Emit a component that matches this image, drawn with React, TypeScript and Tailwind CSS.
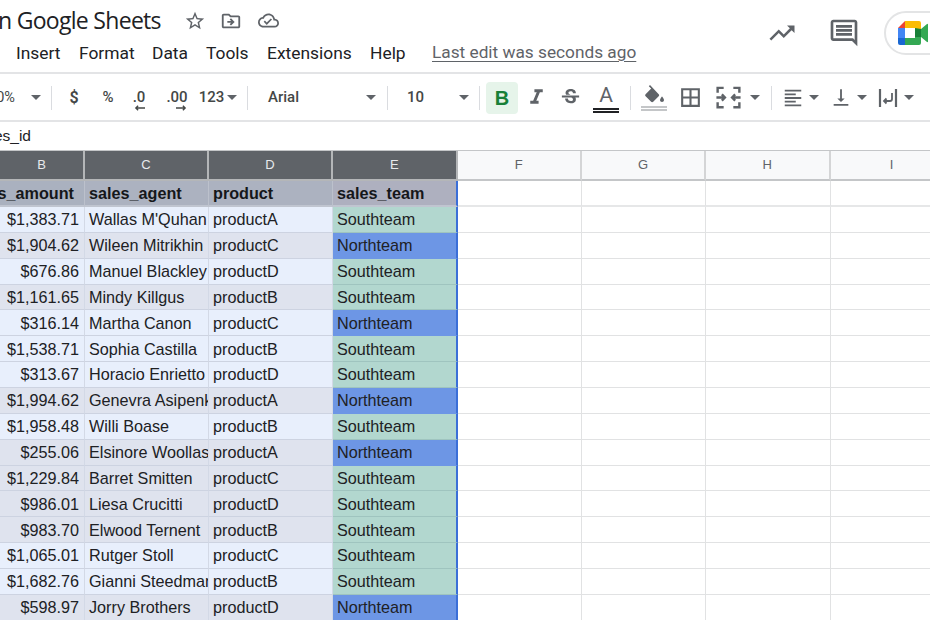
import type { ReactNode } from 'react';

const rows = [
  ['$1,383.71', "Wallas M'Quhan", 'productA', 'S', 0],
  ['$1,904.62', 'Wileen Mitrikhin', 'productC', 'N', 1],
  ['$676.86', 'Manuel Blackley', 'productD', 'S', 0],
  ['$1,161.65', 'Mindy Killgus', 'productB', 'S', 1],
  ['$316.14', 'Martha Canon', 'productC', 'N', 0],
  ['$1,538.71', 'Sophia Castilla', 'productB', 'S', 0],
  ['$313.67', 'Horacio Enrietto', 'productD', 'S', 0],
  ['$1,994.62', 'Genevra Asipenko', 'productA', 'N', 1],
  ['$1,958.48', 'Willi Boase', 'productB', 'S', 0],
  ['$255.06', 'Elsinore Woollaston', 'productA', 'N', 1],
  ['$1,229.84', 'Barret Smitten', 'productC', 'S', 1],
  ['$986.01', 'Liesa Crucitti', 'productD', 'S', 1],
  ['$983.70', 'Elwood Ternent', 'productB', 'S', 1],
  ['$1,065.01', 'Rutger Stoll', 'productC', 'S', 0],
  ['$1,682.76', 'Gianni Steedman', 'productB', 'S', 0],
  ['$598.97', 'Jorry Brothers', 'productD', 'N', 1],
] as const;

const gridCols = 'grid grid-cols-[85px_124px_124px_124.5px_124.5px_124px_124.5px_124px]';

function Icon({ d, size = 22, className = '' }: { d: string; size?: number; className?: string }) {
  return (
    <svg viewBox="0 0 24 24" width={size} height={size} fill="#5f6368" className={className}>
      <path d={d} />
    </svg>
  );
}

function Caret() {
  return (
    <svg viewBox="0 0 10 5" width="10" height="5" fill="#5f6368">
      <path d="M0 0h10L5 5z" />
    </svg>
  );
}

function Sep() {
  return <div className="w-px h-[24px] bg-[#dadce0] shrink-0" />;
}

function Slot({ className, children }: { className: string; children: ReactNode }) {
  return <div className={`flex items-center justify-center shrink-0 h-full ${className}`}>{children}</div>;
}

function MeetLogo() {
  return (
    <svg viewBox="0 0 30 24" width="30" height="24">
      <path d="M7 0v7H0z" fill="#ea4335" />
      <path d="M0 7h7v10H0z" fill="#4285f4" />
      <path d="M0 17h7v7H2a2 2 0 0 1-2-2z" fill="#1967d2" />
      <path d="M7 0h14a2 2 0 0 1 2 2v6l-6 0v-1H7z" fill="#fbbc04" />
      <path d="M7 17h10v-1l6 0v6a2 2 0 0 1-2 2H7z" fill="#34a853" />
      <path d="M17 7l6 1v8l-6 0z" fill="#188038" />
      <path d="M23 8l6-5a.6.6 0 0 1 1 .5v17a.6.6 0 0 1-1 .5l-6-5z" fill="#34a853" />
    </svg>
  );
}

function Cell({ className, children }: { className: string; children?: ReactNode }) {
  return <div className={`flex items-center overflow-hidden whitespace-nowrap box-border ${className}`}>{children}</div>;
}

function ColHead({ label, on }: { label: string; on?: boolean }) {
  return (
    <div
      className={
        on
          ? 'flex items-center justify-center h-[30px] box-border bg-[#5f6368] text-[#e8eaed] border-r-2 border-r-[#b4b6b8] border-b-2 border-b-[#b4b6b8]'
          : 'flex items-center justify-center h-[30px] box-border bg-[#f8f9fa] text-[#5f6368] border-r-2 border-r-[#d4d5d6] border-b-2 border-b-[#c4c6c8]'
      }
    >
      {label}
    </div>
  );
}

export default function App() {
  return (
    <div className="w-[930px] h-[620px] overflow-hidden bg-white text-[#202124] font-['Roboto',sans-serif]">
      {/* title + menu */}
      <div className="flex h-[72px]">
        <div className="w-[760px] shrink-0">
          <div className="flex items-center h-[41px]">
            <span className="text-[23px] -ml-[2px] w-[184px] shrink-0 whitespace-nowrap font-['Open_Sans',sans-serif] tracking-[-0.7px]">n Google Sheets</span>
            <Slot className="w-[26px]">
              <Icon size={22} d="M22 9.24l-7.19-.62L12 2 9.19 8.63 2 9.24l5.46 4.73L5.82 21 12 17.27 18.18 21l-1.63-7.03L22 9.24zM12 15.4l-3.76 2.27 1-4.28-3.32-2.88 4.38-.38L12 6.1l1.71 4.04 4.38.38-3.32 2.88 1 4.28L12 15.4z" />
            </Slot>
            <Slot className="w-[24px] ml-[11px]">
              <Icon size={22} d="M20 6h-8l-2-2H4c-1.1 0-2 .9-2 2v12c0 1.1.9 2 2 2h16c1.1 0 2-.9 2-2V8c0-1.1-.9-2-2-2zm0 12H4V6h5.17l2 2H20v10zm-8.01-9l-1.41 1.41L12.16 12H8v2h4.16l-1.59 1.59L11.99 17 16 13.01 11.99 9z" />
            </Slot>
            <Slot className="w-[24px] ml-[13px]">
              <Icon size={21} d="M19.35 10.04C18.67 6.59 15.64 4 12 4 9.11 4 6.6 5.64 5.35 8.04 2.34 8.36 0 10.91 0 14c0 3.31 2.69 6 6 6h13c2.76 0 5-2.24 5-5 0-2.64-2.05-4.78-4.65-4.96zM19 18H6c-2.21 0-4-1.79-4-4 0-2.05 1.53-3.76 3.56-3.97l1.07-.11.5-.95C8.08 7.14 9.94 6 12 6c2.62 0 4.88 1.86 5.39 4.43l.3 1.5 1.53.11c1.56.1 2.78 1.41 2.78 2.96 0 1.65-1.35 3-3 3zm-9-3.82l-2.09-2.09L6.5 13.5 10 17l6.01-6.01-1.41-1.41z" />
            </Slot>
          </div>
          <div className="flex items-center h-[24px] pl-[16px] text-[17.4px] whitespace-nowrap">
            <span className="w-[63px]">Insert</span>
            <span className="w-[73px]">Format</span>
            <span className="w-[54px]">Data</span>
            <span className="w-[61px]">Tools</span>
            <span className="w-[103px]">Extensions</span>
            <span className="w-[62px]">Help</span>
            <span className="text-[#5f6368] text-[17.25px] underline underline-offset-[3px]">Last edit was seconds ago</span>
          </div>
        </div>
        <Slot className="w-[44px] h-[60px] ml-[0px] pb-[6px]">
          <Icon size={30} d="M16 6l2.29 2.29-4.88 4.88-4-4L2 16.59 3.41 18l6-6 4 4 6.3-6.29L22 12V6z" />
        </Slot>
        <Slot className="w-[80px] h-[60px] pb-[6px]">
          <Icon size={32} d="M21.99 4c0-1.1-.89-2-1.99-2H4c-1.1 0-2 .9-2 2v12c0 1.1.9 2 2 2h14l4 4-.01-18zM20 4v13.17L18.83 16H4V4h16zM6 12h12v2H6zm0-3h12v2H6zm0-3h12v2H6z" />
        </Slot>
        <div className="mt-[11px] h-[44px] w-[70px] shrink-0 box-border border-2 border-[#e3e4e5] rounded-full flex items-center pl-[12px]">
          <MeetLogo />
        </div>
      </div>

      {/* toolbar */}
      <div className="flex items-center h-[50px] pt-[1px] box-border border-y-2 border-[#e3e4e6] text-[#444746] text-[15px] overflow-hidden">
        <div className="w-[51px] shrink-0 flex items-center justify-end overflow-hidden pr-[10px] gap-[16px]">
          <span className="text-[14.5px] shrink-0">100%</span>
          <div className="shrink-0"><Caret /></div>
        </div>
        <Sep />
        <Slot className="w-[44px] font-semibold text-[16px]">$</Slot>
        <Slot className="w-[24px] text-[15px] font-medium">%</Slot>
        <Slot className="w-[38px] font-medium relative">
          <span>.0</span>
          <svg viewBox="0 0 12 6" width="11" height="6" className="absolute left-[14px] top-[30px]" fill="none" stroke="#444746" strokeWidth="1.5">
            <path d="M12 3H2M4.5.5L2 3l2.5 2.5" />
          </svg>
        </Slot>
        <Slot className="w-[38px] font-medium relative">
          <span>.00</span>
          <svg viewBox="0 0 12 6" width="11" height="6" className="absolute left-[18px] top-[30px]" fill="none" stroke="#444746" strokeWidth="1.5">
            <path d="M0 3h10M7.5.5L10 3 7.5 5.5" />
          </svg>
        </Slot>
        <Slot className="w-[44px] gap-[3px] font-medium"><span>123</span><Caret /></Slot>
        <div className="ml-[7px]"><Sep /></div>
        <div className="w-[139px] shrink-0 flex items-center justify-between pl-[20px] pr-[11px] font-medium text-[15px]">
          <span>Arial</span>
          <Caret />
        </div>
        <Sep />
        <div className="w-[91px] shrink-0 flex items-center justify-between pl-[19px] pr-[10px] font-medium">
          <span>10</span>
          <Caret />
        </div>
        <Sep />
        <div className="w-[32px] h-[32px] ml-[6px] shrink-0 rounded-[4px] bg-[#e6f4ea] text-[#188038] flex items-center justify-center text-[20px] font-bold font-['Liberation_Sans',sans-serif]">B</div>
        <Slot className="w-[36px]"><Icon size={25} d="M10 4v3h2.21l-3.42 8H6v3h8v-3h-2.21l3.42-8H18V4z" /></Slot>
        <Slot className="w-[33px]"><Icon size={23} d="M6.85 7.08C6.85 4.37 9.45 3 12.24 3c1.64 0 3 .49 3.9 1.28.77.65 1.46 1.73 1.46 3.24h-3.01c0-.31-.05-.59-.15-.85-.29-.86-1.2-1.28-2.25-1.28-1.86 0-2.34 1.02-2.34 1.7 0 .48.25.88.74 1.21.38.25.77.48 1.41.7H7.39c-.21-.34-.54-.89-.54-1.92zM21 12v-2H3v2h9.62c1.15.45 1.96.75 1.96 1.97 0 1-.81 1.67-2.28 1.67-1.54 0-2.93-.54-2.93-2.51H6.4c0 .55.08 1.13.24 1.58.81 2.29 3.29 3.3 5.67 3.3 2.27 0 5.3-.89 5.3-4.05 0-.3-.01-1.16-.48-1.94H21V12z" /></Slot>
        <div className="w-[38px] shrink-0 flex flex-col items-center">
          <span className="text-[21px] leading-[24px] text-[#5f6368]">A</span>
          <div className="w-[26px] h-[2px] bg-[#202124] mt-[1px]" />
          <div className="w-[26px] h-[2px] bg-[#202124] mt-[1px]" />
        </div>
        <div className="ml-[5px]"><Sep /></div>
        <div className="w-[46px] shrink-0 flex flex-col items-center">
          <svg viewBox="0 0 24 20" width="24" height="20" fill="#5f6368">
            <path d="M8 0L6.8 1.2l2.4 2.4-5.6 5.6c-.6.6-.6 1.5 0 2.1l5.5 5.5c.6.6 1.5.6 2.1 0l5.5-5.5c.6-.6.6-1.5 0-2.1z" />
            <path d="M20 11.5s-2 2.2-2 3.5c0 1.1.9 2 2 2s2-.9 2-2c0-1.3-2-3.5-2-3.5z" />
          </svg>
          <div className="w-[26px] h-[2px] bg-[#c4c6c8] mt-[1px]" />
          <div className="w-[26px] h-[2px] bg-[#c4c6c8] mt-[1px]" />
        </div>
        <Slot className="w-[26px]"><Icon size={25} d="M3 3v18h18V3H3zm8 16H5v-6h6v6zm0-8H5V5h6v6zm8 8h-6v-6h6v6zm0-8h-6V5h6v6z" /></Slot>
        <Slot className="w-[30px] ml-[10px]">
          <svg viewBox="0 0 24 24" width="29" height="29" fill="none" stroke="#5f6368" strokeWidth="2">
            <path d="M3 8V4h5M16 4h5v4M3 16v4h5M16 20h5v-4" />
            <path d="M2 12h7M6.5 9.5L9 12l-2.5 2.5M22 12h-7M17.5 9.5L15 12l2.5 2.5" />
          </svg>
        </Slot>
        <Slot className="w-[24px]"><Caret /></Slot>
        <div className="ml-[4px]"><Sep /></div>
        <Slot className="w-[22px] ml-[10px]"><Icon size={24} d="M15 15H3v2h12v-2zm0-8H3v2h12V7zM3 13h18v-2H3v2zm0 8h18v-2H3v2zM3 3v2h18V3H3z" /></Slot>
        <Slot className="w-[20px]"><Caret /></Slot>
        <Slot className="w-[22px] ml-[6px]"><Icon size={25} d="M16 13h-3V3h-2v10H8l4 4 4-4zM4 19v2h16v-2H4z" /></Slot>
        <Slot className="w-[20px]"><Caret /></Slot>
        <Slot className="w-[32px]">
          <svg viewBox="0 0 24 24" width="24" height="24" fill="none" stroke="#5f6368" strokeWidth="2.2">
            <path d="M4 3v18M20 3v18" />
            <path d="M16 7v6a2 2 0 0 1-2 2H8M10.5 12.5L8 15l2.5 2.5" strokeWidth="1.8" />
          </svg>
        </Slot>
        <Slot className="w-[10px]"><Caret /></Slot>
        <Slot className="w-[26px] pl-[18px] overflow-hidden"><div className="shrink-0"><Caret /></div></Slot>
      </div>

      {/* formula bar */}
      <div className="flex items-center h-[28px] text-[15.5px] text-[#202124] font-['Liberation_Sans',sans-serif]">
        <div className="w-[31px] flex justify-end overflow-hidden whitespace-nowrap"><span className="shrink-0">sales_id</span></div>
      </div>

      {/* sheet */}
      <div className="border-t-[1.5px] border-[#c4c6c8] text-[16.2px] font-['Liberation_Sans',sans-serif]">
        <div className={`${gridCols} text-[13px]`}>
          <ColHead label="B" on />
          <ColHead label="C" on />
          <ColHead label="D" on />
          <ColHead label="E" on />
          <ColHead label="F" />
          <ColHead label="G" />
          <ColHead label="H" />
          <ColHead label="I" />
        </div>
        <div className={`${gridCols} h-[26px] font-bold text-[#15171a]`}>
          <Cell className="justify-end pr-[10px] pt-[1px] bg-[#aab1bf] border-r border-r-[#bcc1cc] border-b-2 border-b-[#c0c5d0]"><span className="shrink-0">sales_amount</span></Cell>
          <Cell className="pl-[4px] pt-[1px] bg-[#acb2c0] border-r border-r-[#bcc1cc] border-b-2 border-b-[#c0c5d0]">sales_agent</Cell>
          <Cell className="pl-[4px] pt-[1px] bg-[#acb2c0] border-r border-r-[#bcc1cc] border-b-2 border-b-[#c0c5d0]">product</Cell>
          <Cell className="pl-[4px] pt-[1px] bg-[#aeb0bf] border-r-2 border-r-[#3b6fd8] border-b-2 border-b-[#c0c5d0]">sales_team</Cell>
          <Cell className="border-r border-r-[#e1e2e3] border-b-2 border-b-[#e6e7e8]" />
          <Cell className="border-r border-r-[#e1e2e3] border-b-2 border-b-[#e6e7e8]" />
          <Cell className="border-r border-r-[#e1e2e3] border-b-2 border-b-[#e6e7e8]" />
          <Cell className="border-b-2 border-b-[#e6e7e8]" />
        </div>
        {rows.map(([amount, agent, product, team, dark]) => (
          <div key={agent} className={`${gridCols} h-[25.87px]`}>
            <Cell className={`justify-end pr-[5px] border-r border-r-[#d3d9e6] border-b border-b-[#cdd3e1] ${dark ? 'bg-[#dfe3ee]' : 'bg-[#e8effc]'}`}>{amount}</Cell>
            <Cell className={`pl-[4px] border-r border-r-[#d3d9e6] border-b border-b-[#cdd3e1] ${dark ? 'bg-[#dfe3ee]' : 'bg-[#e8effc]'}`}>{agent}</Cell>
            <Cell className={`pl-[4px] border-r border-r-[#d3d9e6] border-b border-b-[#cdd3e1] ${dark ? 'bg-[#dfe3ee]' : 'bg-[#e8effc]'}`}>{product}</Cell>
            <Cell className={`pl-[4px] border-r-2 border-r-[#3b6fd8] border-b ${team === 'N' ? 'bg-[#6d96e5] border-b-[#6d96e5]' : 'bg-[#b2d7cf] border-b-[#9fc4bf]'}`}>
              {team === 'N' ? 'Northteam' : 'Southteam'}
            </Cell>
            <Cell className="border-r border-r-[#e1e2e3] border-b border-b-[#e1e2e3]" />
            <Cell className="border-r border-r-[#e1e2e3] border-b border-b-[#e1e2e3]" />
            <Cell className="border-r border-r-[#e1e2e3] border-b border-b-[#e1e2e3]" />
            <Cell className="border-b border-b-[#e1e2e3]" />
          </div>
        ))}
      </div>
    </div>
  );
}
